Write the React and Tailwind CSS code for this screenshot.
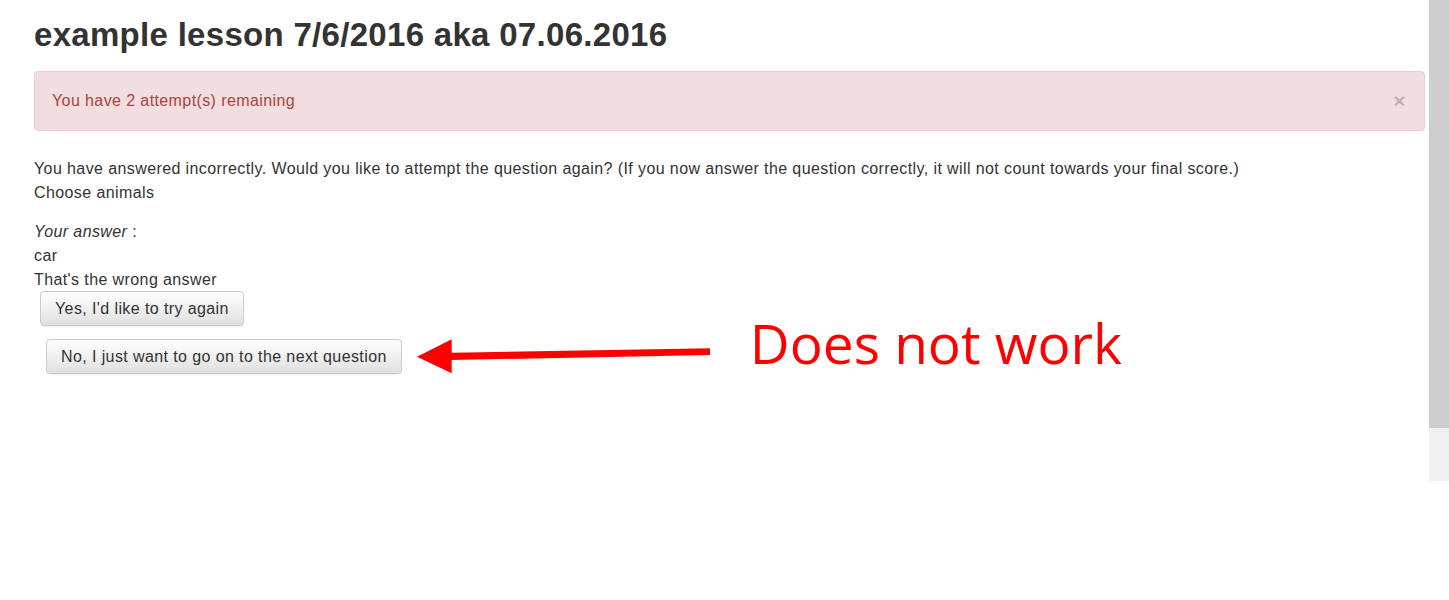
export default function App() {
  const btn =
    "h-[35px] px-[14px] flex items-center rounded-[4px] border border-[#cccccc] bg-gradient-to-b from-white to-[#e0e0e0] text-[16px] tracking-[0.4px] text-[#333333] shadow-[inset_0_1px_0_rgba(255,255,255,0.15),0_1px_1px_rgba(0,0,0,0.075)]";
  return (
    <div className="flex w-full min-h-[600px] bg-white font-['Liberation_Sans',Arial,sans-serif] text-[#333333]">
      <div className="flex-1 pl-[34px] pr-[4px]">
        <h1 className="mt-[17px] text-[33px] tracking-[0.3px] leading-[36px] font-bold text-[#333333]">
          example lesson 7/6/2016 aka 07.06.2016
        </h1>
        <div className="mt-[18px] flex items-center justify-between rounded-[4px] border border-[#ebccd1] bg-[#f2dede] pl-[17px] pr-[18px] py-[19px] text-[16px] tracking-[0.4px] leading-[20px] text-[#a94442]">
          <span>You have 2 attempt(s) remaining</span>
          <span className="text-[21px] font-bold leading-[20px] text-black opacity-20">×</span>
        </div>
        <div className="mt-[26px] text-[16px] tracking-[0.4px] leading-[24px]">
          <div>
            You have answered incorrectly. Would you like to attempt the question again? (If you now answer the question correctly, it will not count towards your final score.)
          </div>
          <div>Choose animals</div>
          <div className="mt-[15px]">
            <em>Your answer</em> :
          </div>
          <div>car</div>
          <div>That's the wrong answer</div>
        </div>
        <div className="ml-[6px] -mt-[1px] flex">
          <button className={btn}>Yes, I'd like to try again</button>
        </div>
        <div className="ml-[12px] mt-[13px] flex items-start">
          <button className={btn}>No, I just want to go on to the next question</button>
          <svg width="293" height="35" viewBox="0 0 293 35" className="ml-[15px] shrink-0">
            <polygon points="0,17.7 34.7,0.3 34.7,34.3" fill="#ff0000" />
            <polygon points="34,13.7 293,9.3 293,16 34,21" fill="#ff0000" />
          </svg>
          <span className="ml-[40px] -mt-[24px] font-['Open_Sans',sans-serif] text-[55px] leading-[55px] text-[#ff0000] whitespace-nowrap">
            Does not work
          </span>
        </div>
      </div>
      <div className="w-[20px] shrink-0 flex flex-col">
        <div className="h-[428px] bg-[#cdcdcd]" />
        <div className="h-[53px] bg-[#f0f0f0]" />
      </div>
    </div>
  );
}
